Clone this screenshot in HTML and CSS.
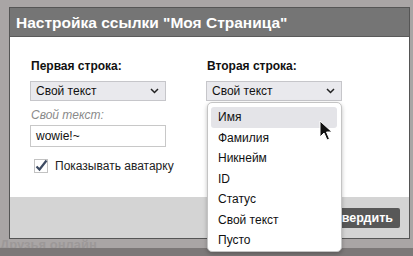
FILE: index.html
```html
<!DOCTYPE html>
<html lang="ru">
<head>
  <meta charset="utf-8">
  <title>Настройка ссылки</title>
<link rel="stylesheet" href="styles.css">
</head>
<body>
  <div class="page">
    <div class="page-friends">Друзья онлайн</div>
    <div class="page-bar"></div>
  </div>

  <div class="dialog">
    <div class="dialog-head">Настройка ссылки "Моя Страница"</div>
    <div class="dialog-body">
      <div class="col">
        <div class="label">Первая строка:</div>
        <div class="select">
          <span>Свой текст</span>
          <svg class="chev" width="9" height="6" viewBox="0 0 9 6"><polyline points="1,1 4.5,4.5 8,1" fill="none" stroke="#222" stroke-width="1.5"/></svg>
        </div>
        <div class="hint">Свой текст:</div>
        <div class="input">wowie!~</div>
        <div class="check">
          <svg class="box" width="14" height="14" viewBox="0 0 14 14">
            <rect x="0.5" y="0.5" width="13" height="13" fill="#fff" stroke="#c2c2c2"/>
            <polyline points="2.5,7.5 5.5,10.5 12.5,1.5" fill="none" stroke="#3d4b63" stroke-width="2.2"/>
          </svg>
          <span>Показывать аватарку</span>
        </div>
      </div>
      <div class="col">
        <div class="label">Вторая строка:</div>
        <div class="select">
          <span>Свой текст</span>
          <svg class="chev" width="9" height="6" viewBox="0 0 9 6"><polyline points="1,1 4.5,4.5 8,1" fill="none" stroke="#222" stroke-width="1.5"/></svg>
        </div>
        <ul class="menu">
          <li class="active">Имя</li>
          <li>Фамилия</li>
          <li>Никнейм</li>
          <li>ID</li>
          <li>Статус</li>
          <li>Свой текст</li>
          <li>Пусто</li>
        </ul>
      </div>
    </div>
    <div class="dialog-foot">
      <button class="btn">Подтвердить</button>
    </div>
  </div>

  <svg class="cursor" width="16" height="22" viewBox="0 0 16 22">
    <path d="M1 1 L1 17 L5 13 L8 20 L10.5 19 L7.5 12 L13 12 Z" fill="#111" stroke="#fff" stroke-width="1"/>
  </svg>
</body>
</html>
```

FILE: styles.css
```css
body {
  margin: 0;
  width: 413px;
  height: 256px;
  overflow: hidden;
  background: #a9a5a5;
  font-family: "Liberation Sans", Arial, sans-serif;
  position: relative;
}
.page-friends {
  position: absolute;
  left: 0;
  top: 237px;
  color: #9c9898;
  font-size: 13px;
  font-weight: bold;
}
.page-bar {
  position: absolute;
  left: 0;
  right: 0;
  top: 248px;
  height: 8px;
  background: #7c7878;
}
.dialog {
  position: absolute;
  left: 9px;
  top: 7px;
  width: 399px;
  border: 1px solid #555;
  background: #fff;
}
.dialog-head {
  height: 28px;
  background: #757575;
  border-bottom: 1px solid #5a5a5a;
  color: #fff;
  font-weight: bold;
  font-size: 15.5px;
  line-height: 29px;
  padding-left: 6px;
}
.dialog-body {
  height: 160px;
  display: flex;
  gap: 40px;
  padding-left: 20px;
  box-sizing: border-box;
  padding-top: 21px;
}
.col {
  width: 136px;
  display: flex;
  flex-direction: column;
  position: relative;
}
.label {
  font-size: 12px;
  font-weight: bold;
  color: #111;
  padding-left: 1px;
  height: 17px;
  line-height: 16px;
  margin-bottom: 6px;
}
.select {
  height: 20px;
  box-sizing: border-box;
  border: 1px solid #c6c6ca;
  background: #e9e9ed;
  display: flex;
  align-items: center;
  justify-content: space-between;
  padding: 0 6px 0 5px;
  font-size: 12px;
  color: #111;
}
.hint {
  margin-top: 7px;
  font-size: 12px;
  font-style: italic;
  color: #8a8a8a;
  padding-left: 1px;
  height: 17px;
}
.input {
  height: 22px;
  box-sizing: border-box;
  border: 1px solid #c8c8c8;
  padding-left: 5px;
  font-size: 12px;
  line-height: 20px;
  color: #111;
}
.check {
  margin-top: 12px;
  display: flex;
  align-items: center;
  gap: 7px;
  padding-left: 4px;
  font-size: 12px;
  color: #222;
  white-space: nowrap;
}
.box {
  flex-shrink: 0;
}
.menu {
  position: absolute;
  left: 1px;
  top: 44px;
  width: 135px;
  height: 150px;
  box-sizing: border-box;
  margin: 0;
  padding: 4px 4px 0 3px;
  list-style: none;
  background: #fff;
  border: 1px solid #c4c4c4;
  border-radius: 5px;
  box-shadow: 0 2px 4px rgba(0, 0, 0, 0.25);
  z-index: 2;
}
.menu li {
  height: 20.5px;
  line-height: 20px;
  padding-left: 7px;
  font-size: 12px;
  color: #111;
  border-radius: 3px;
}
.menu li.active {
  background: #e4e4e8;
}
.dialog-foot {
  height: 41px;
  background: #d4d4d4;
  display: flex;
  justify-content: flex-end;
  align-items: center;
  padding-right: 9px;
  box-sizing: border-box;
}
.btn {
  height: 20px;
  border: 0;
  border-radius: 2px;
  background: #585858;
  color: #fff;
  font-family: inherit;
  font-size: 12.5px;
  font-weight: bold;
  padding: 0 7px;
  margin-top: 1px;
}
.cursor {
  position: absolute;
  left: 319px;
  top: 120px;
  z-index: 3;
}
```
